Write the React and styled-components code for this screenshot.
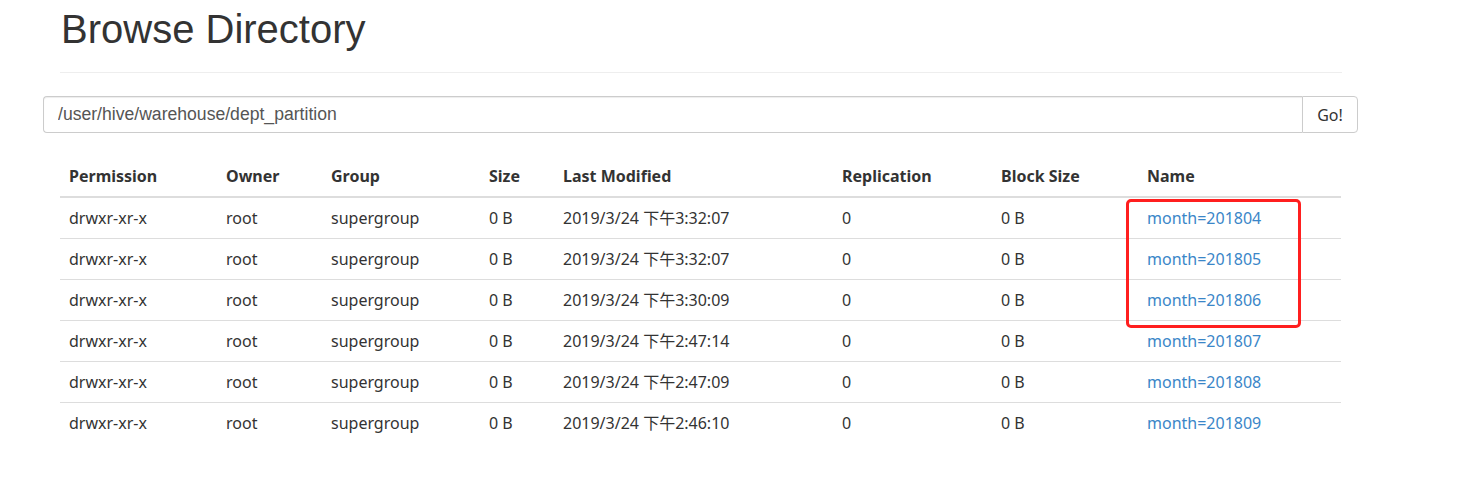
import styled, { createGlobalStyle } from "styled-components";

const GlobalStyle = createGlobalStyle`
  body {
    margin: 0;
    background: #fff;
    font-family: "Noto Sans", "Noto Sans CJK SC", sans-serif;
    color: #333;
  }
`;

const rows = [
  ["2019/3/24 下午3:32:07", "month=201804"],
  ["2019/3/24 下午3:32:07", "month=201805"],
  ["2019/3/24 下午3:30:09", "month=201806"],
  ["2019/3/24 下午2:47:14", "month=201807"],
  ["2019/3/24 下午2:47:09", "month=201808"],
  ["2019/3/24 下午2:46:10", "month=201809"],
];

const columns = [
  ["Permission", 157],
  ["Owner", 105],
  ["Group", 158],
  ["Size", 74],
  ["Last Modified", 279],
  ["Replication", 159],
  ["Block Size", 146],
  ["Name", 203],
];

const App = () => {
  return (
    <Page>
      <GlobalStyle />
      <Header>
        <Title>Browse Directory</Title>
      </Header>
      <InputGroup>
        <PathInput defaultValue="/user/hive/warehouse/dept_partition" />
        <GoButton>Go!</GoButton>
      </InputGroup>
      <TableWrap>
        <Table>
          <colgroup>
            {columns.map(([name, w]) => (
              <col key={name} style={{ width: w }} />
            ))}
          </colgroup>
          <thead>
            <tr>
              {columns.map(([name]) => (
                <Th key={name}>{name}</Th>
              ))}
            </tr>
          </thead>
          <tbody>
            {rows.map(([date, name]) => (
              <tr key={name}>
                <Td>drwxr-xr-x</Td>
                <Td>root</Td>
                <Td>supergroup</Td>
                <Td>0 B</Td>
                <Td>{date}</Td>
                <Td>0</Td>
                <Td>0 B</Td>
                <Td>
                  <NameLink href="#">{name}</NameLink>
                </Td>
              </tr>
            ))}
          </tbody>
        </Table>
        <Highlight />
      </TableWrap>
    </Page>
  );
};

const Page = styled.div`
  width: 1282px;
  padding-left: 60px;
`;

const Header = styled.div`
  padding-bottom: 21px;
  border-bottom: 1px solid #eee;
`;

const Title = styled.h1`
  margin: 7px 0 0 1px;
  font-family: "Liberation Sans", Arial, sans-serif;
  font-weight: 400;
  font-size: 40px;
  line-height: 44px;
  color: #333;
`;

const InputGroup = styled.div`
  display: flex;
  margin: 23px 0 0 -17px;
  width: 1315px;
  height: 37px;
`;

const PathInput = styled.input`
  flex: 1;
  box-sizing: border-box;
  height: 37px;
  padding: 0 14px;
  border: 1px solid #ccc;
  border-right: none;
  border-radius: 4px 0 0 4px;
  box-shadow: inset 0 1px 1px rgba(0, 0, 0, 0.075);
  font-family: "Liberation Sans", Arial, sans-serif;
  font-size: 17.6px;
  color: #555;
  outline: none;
`;

const GoButton = styled.button`
  box-sizing: border-box;
  width: 56px;
  height: 37px;
  border: 1px solid #ccc;
  border-radius: 0 4px 4px 0;
  background: #fff;
  font-family: "Noto Sans", "Noto Sans CJK SC", sans-serif;
  font-size: 16px;
  color: #333;
  padding: 0;
`;

const TableWrap = styled.div`
  position: relative;
  margin-top: 23px;
  width: 1281px;
`;

const Table = styled.table`
  width: 1281px;
  table-layout: fixed;
  border-collapse: collapse;
  font-size: 16px;
`;

const Th = styled.th`
  text-align: left;
  font-weight: 700;
  padding: 9px 9px;
  line-height: 22px;
  border-bottom: 2px solid #ddd;
  color: #333;
  white-space: nowrap;
`;

const Td = styled.td`
  padding: 9px 9px;
  line-height: 22px;
  border-top: 1px solid #ddd;
  color: #333;
  white-space: nowrap;
`;

const NameLink = styled.a`
  color: #3a86c8;
  text-decoration: none;
`;

const Highlight = styled.div`
  position: absolute;
  left: 1066px;
  top: 43px;
  width: 175px;
  height: 129px;
  box-sizing: border-box;
  border: 3px solid #ff1f1f;
  border-radius: 5px;
  pointer-events: none;
`;

export default App;
